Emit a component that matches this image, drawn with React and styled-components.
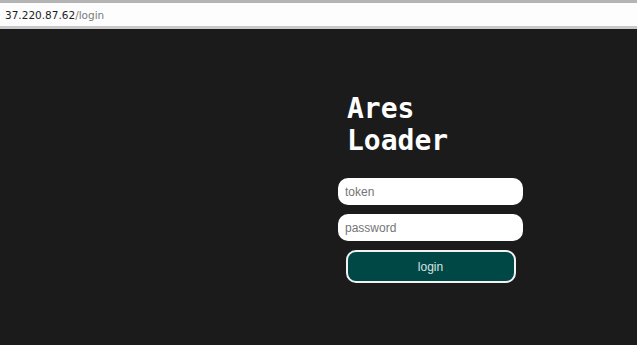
import React from "react";
import styled, { createGlobalStyle } from "styled-components";

const GlobalStyle = createGlobalStyle`
  html, body {
    margin: 0;
    padding: 0;
    background: #1b1b1b;
  }
  body {
    font-family: "Liberation Sans", Arial, sans-serif;
  }
`;

const Page = styled.div`
  width: 637px;
  height: 345px;
  display: flex;
  flex-direction: column;
  background: #1b1b1b;
  overflow: hidden;
`;

const AddressBar = styled.div`
  height: 23px;
  display: flex;
  align-items: center;
  padding-left: 5px;
  background: #fdfdfd;
  border-top: 3px solid #b4b4b4;
  border-bottom: 3px solid #c9c9c9;
  font-family: "DejaVu Sans", sans-serif;
  font-size: 10.5px;
  color: #222;
`;

const Host = styled.span`
  color: #1e1e1e;
`;

const Path = styled.span`
  color: #7a7a7a;
`;

const Main = styled.main`
  flex: 1;
  padding: 64px 0 0 338px;
`;

const Form = styled.form`
  width: 185px;
  display: flex;
  flex-direction: column;
`;

const Title = styled.h1`
  margin: 0 0 21px 9px;
  width: 140px;
  font-family: "DejaVu Sans Mono", monospace;
  font-size: 28px;
  font-weight: bold;
  line-height: 32px;
  color: #fff;
`;

const Input = styled.input`
  box-sizing: border-box;
  height: 27px;
  width: 100%;
  margin-bottom: 9px;
  padding: 0 7px;
  border: none;
  border-radius: 10px;
  background: #fff;
  font-family: "Liberation Sans", Arial, sans-serif;
  font-size: 12px;
  outline: none;

  &::placeholder {
    color: #757575;
  }
`;

const Button = styled.button`
  box-sizing: border-box;
  align-self: center;
  width: 170px;
  height: 33px;
  border: 2px solid #f2f2f2;
  border-radius: 10px;
  background: #004846;
  color: #d9e2e1;
  font-family: "Liberation Sans", Arial, sans-serif;
  font-size: 12px;
  cursor: pointer;
`;

export default function App() {
  return (
    <>
      <GlobalStyle />
      <Page>
        <AddressBar>
          <Host>37.220.87.62</Host>
          <Path>/login</Path>
        </AddressBar>
        <Main>
          <Form onSubmit={(e) => e.preventDefault()}>
            <Title>Ares Loader</Title>
            <Input type="text" placeholder="token" />
            <Input type="password" placeholder="password" />
            <Button type="submit">login</Button>
          </Form>
        </Main>
      </Page>
    </>
  );
}
